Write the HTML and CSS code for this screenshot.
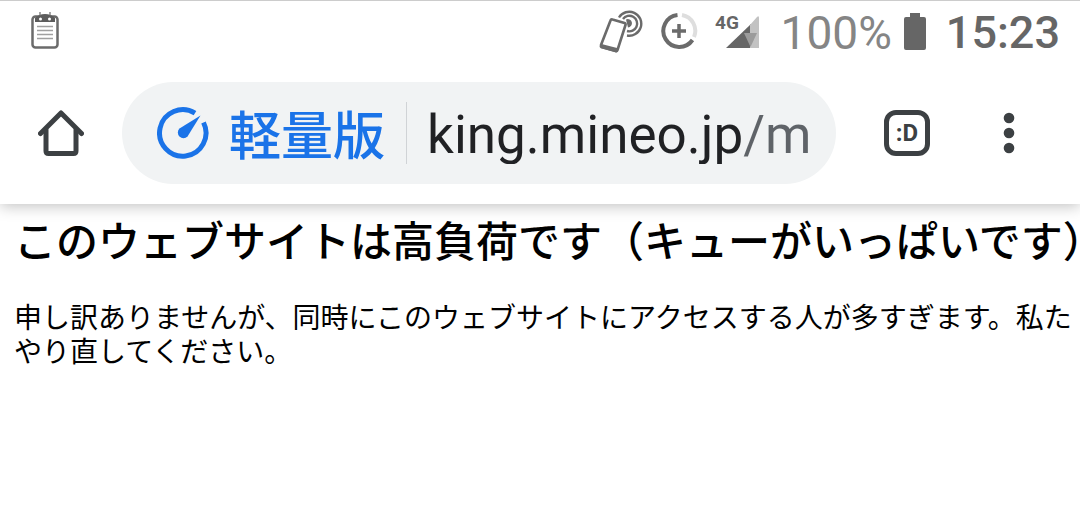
FILE: index.html
```
<!DOCTYPE html>
<html lang="ja">
<head>
    <meta charset="UTF-8">
    <meta name="viewport" content="width=device-width, initial-scale=1.0">
    <title>king.mineo.jp</title>
    <link rel="stylesheet" href="styles.css">
</head>
<body>
    <!-- Status bar -->
    <div class="status-bar">
        <svg class="status-note" width="30" height="40" viewBox="0 0 30 40">
            <rect x="2.500" y="5.500" width="25" height="31" rx="3" fill="#fff" stroke="#6b6b6b" stroke-width="2.500"/>
            <path d="M5 11V7Q9 3 15 3T25 7V11Z" fill="#5c5c5c"/>
            <path d="M10 1V5M20 1V5" stroke="#6b6b6b" stroke-width="1.200"/>
            <circle cx="10.500" cy="8" r="1.500" fill="#fff"/>
            <circle cx="19.500" cy="8" r="1.500" fill="#fff"/>
            <path d="M7 15.500H23M7 19.500H23M7 23.500H23M7 27.500H23" stroke="#a0a0a0" stroke-width="1.300"/>
        </svg>
        <div class="status-icons">
            <svg width="46" height="46" viewBox="0 0 46 46">
                <g fill="none" stroke="#6b6b6b" stroke-width="2.400">
                    <path d="M22 9.500A12 12 0 1 1 30 27.500"/>
                    <path d="M26 11A7.800 7.800 0 1 1 30 23"/>
                </g>
                <path d="M29 11.500A4.200 4.200 0 1 1 31 19.500Z" fill="#6b6b6b"/>
                <path d="M15.500 11.500L27.500 15Q29 15.500 28.500 17L20.500 42Q20 43.500 18.500 43L4.500 39Q3.500 38.500 4 37L13.500 12.500Q14 11 15.500 11.500Z" fill="#fff" stroke="#6b6b6b" stroke-width="2.600"/>
                <path d="M4.500 36L22 40.500L19.500 44.500L3.500 40Z" fill="#6b6b6b"/>
            </svg>
            <svg width="38" height="38" viewBox="0 0 38 38">
                <path d="M22 3A16 16 0 0 1 34 25" fill="none" stroke="#dedede" stroke-width="4"/>
                <path d="M17.500 3A16 16 0 1 0 32.500 28" fill="none" stroke="#6b6b6b" stroke-width="4"/>
                <path d="M19 12V26M12 19H26" stroke="#6b6b6b" stroke-width="3.500"/>
            </svg>
            <svg width="46" height="40" viewBox="0 0 46 40">
                <path d="M11 37L36 13V37Z" fill="#666"/>
                <path d="M35 14L42 6Q44 4 44 7V37H35Z" fill="#c2c2c2"/>
                <path d="M29 22H42L35.500 36Z" fill="#9b9b9b"/>
                <text class="network-label" x="0" y="18">4G</text>
            </svg>
        </div>
        <span class="battery-level">100%</span>
        <svg width="22" height="38" viewBox="0 0 22 38">
            <path d="M6 1H16V5H20Q22 5 22 7V36Q22 38 20 38H2Q0 38 0 36V7Q0 5 2 5H6Z" fill="#666"/>
        </svg>
        <span class="clock">15:23</span>
    </div>

    <!-- Browser toolbar -->
    <div class="toolbar">
        <button class="icon-button home" type="button" aria-label="ホーム">
            <svg width="46" height="46" viewBox="0 0 46 46" fill="none" stroke="#3c4043" stroke-width="5" stroke-linecap="round" stroke-linejoin="round">
                <path d="M2.500 23.500L23 3L43.500 23.500"/>
                <path d="M8 20V41Q8 43.500 10.500 43.500H35.500Q38 43.500 38 41V20"/>
            </svg>
        </button>
        <div class="address-bar">
            <svg width="52" height="52" viewBox="0 0 52 52">
                <path d="M38 6.200A23.200 23.200 0 1 0 46.500 15.500" fill="none" stroke="#1a73e8" stroke-width="5"/>
                <path d="M43.500 8.500L22.500 21.500A5.600 5.600 0 1 0 30.500 29.500Z" fill="#1a73e8"/>
            </svg>
            <span class="lite-label">軽量版</span>
            <input class="url" type="text" value="king.mineo.jp/m" aria-label="アドレス">
        </div>
        <button class="icon-button" type="button" aria-label="タブ">
            <span class="tab-count">:D</span>
        </button>
        <button class="icon-button" type="button" aria-label="メニュー">
            <svg width="12" height="42" viewBox="0 0 12 42" fill="#3c4043">
                <circle cx="6" cy="6" r="5.300"/>
                <circle cx="6" cy="21" r="5.300"/>
                <circle cx="6" cy="36" r="5.300"/>
            </svg>
        </button>
    </div>

    <!-- Page content -->
    <main class="content">
        <h1>このウェブサイトは高負荷です（キューがいっぱいです）</h1>
        <p>申し訳ありませんが、同時にこのウェブサイトにアクセスする人が多すぎます。私た<br>やり直してください。</p>
    </main>
</body>
</html>
```
FILE: styles.css
```
/* General body styling */
body {
    margin: 0;
    background-color: #fff;
    color: #000;
    font-family: 'Noto Sans CJK JP', sans-serif;
    overflow: hidden;
}

svg {
    display: block;
    flex: none;
}

/* Status bar, kept above the toolbar shadow */
.status-bar {
    position: relative;
    z-index: 1;
    display: flex;
    align-items: center;
    height: 60px;
    padding: 0 20px 0 30px;
    border-top: 1px solid #ccc;
    background-color: #fff;
    font-family: Roboto, sans-serif;
    font-size: 46px;
    line-height: 60px;
}

.status-icons {
    display: flex;
    align-items: center;
    gap: 17px;
    margin-left: auto;
    margin-right: 20px;
}

.network-label {
    font-size: 19px;
    font-weight: bold;
    fill: #666;
}

.battery-level {
    margin-right: 12px;
    padding-top: 4px;
    color: #858585;
}

.clock {
    margin-left: 20px;
    padding-top: 4px;
    color: #666;
    font-size: 45px;
    font-weight: 500;
}

/* Browser toolbar */
.toolbar {
    position: relative;
    display: flex;
    align-items: center;
    height: 143px;
    padding-right: 20px;
    box-shadow: 0 2px 14px rgba(0, 0, 0, 0.25);
}

.icon-button {
    display: flex;
    align-items: center;
    justify-content: center;
    width: 102px;
    padding: 0;
    border: none;
    background: none;
    flex: none;
}

.home {
    width: 122px;
}

.address-bar {
    display: flex;
    align-items: center;
    flex: 1;
    min-width: 0;
    height: 102px;
    margin-right: 20px;
    padding: 0 20px 0 35px;
    border-radius: 51px;
    background-color: #f1f3f4;
    box-sizing: border-box;
}

.lite-label {
    margin: 0 21px 0 20px;
    color: #1a73e8;
    font-size: 52px;
    font-weight: 500;
    line-height: 60px;
    white-space: nowrap;
}

/* Host is dark, path is grey */
.url {
    flex: 1;
    min-width: 0;
    height: 62px;
    padding: 4px 0 0 20px;
    border: none;
    border-left: 1px solid #d0d3d6;
    background: linear-gradient(to right, #202124 334px, #5f6368 334px);
    -webkit-background-clip: text;
    background-clip: text;
    box-sizing: border-box;
    color: transparent;
    font-family: Roboto, sans-serif;
    font-size: 53px;
}

.tab-count {
    width: 46px;
    height: 46px;
    border: 5px solid #3c4043;
    border-radius: 12px;
    box-sizing: border-box;
    color: #3c4043;
    font-family: Roboto, sans-serif;
    font-size: 24px;
    font-weight: bold;
    line-height: 36px;
}

/* Page content */
.content {
    padding: 10px 0 0 14px;
    white-space: nowrap;
}

.content h1 {
    margin: 0 0 35px;
    font-size: 42px;
    font-weight: 500;
    line-height: 50px;
}

.content p {
    margin: 0;
    font-size: 28px;
    line-height: 34px;
}
```
